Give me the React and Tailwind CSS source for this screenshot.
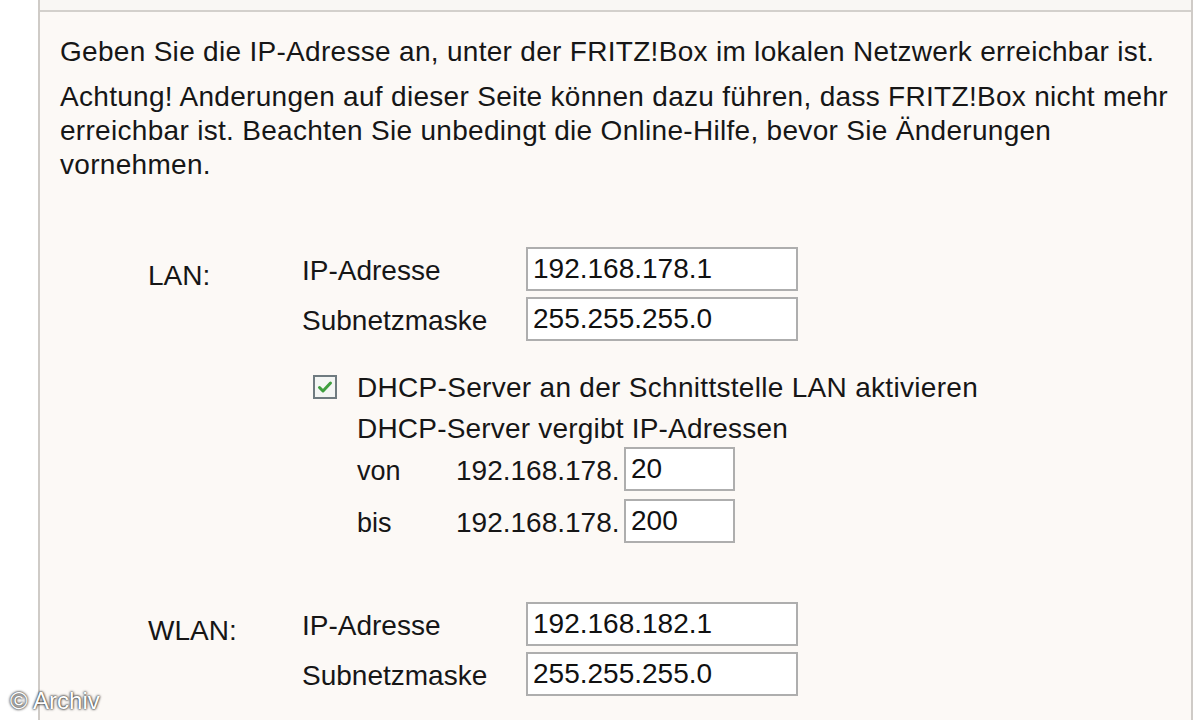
import React from 'react';

const TextBox = ({ value, className = '' }) => (
  <div
    className={`h-[44px] border-2 border-[#aeaeae] bg-white pl-[5px] flex items-center text-[28px] text-[#111] leading-none ${className}`}
  >
    {value}
  </div>
);

const AddressRows = ({ name, ip, mask, children }) => (
  <div className="flex">
    <div className="w-[154px] pt-[12px] text-[28px] leading-[34px]">{name}</div>
    <div className="flex flex-col">
      <div className="flex flex-col gap-[6px]">
        <div className="flex items-center">
          <div className="w-[224px] text-[28px] leading-[34px] pt-[4px]">IP-Adresse</div>
          <TextBox value={ip} className="w-[272px]" />
        </div>
        <div className="flex items-center">
          <div className="w-[224px] text-[28px] leading-[34px] pt-[4px]">Subnetzmaske</div>
          <TextBox value={mask} className="w-[272px]" />
        </div>
      </div>
      {children}
    </div>
  </div>
);

const CheckIcon = () => (
  <svg viewBox="0 0 24 24" className="w-[24px] h-[24px]">
    <rect x="1" y="1" width="22" height="22" fill="#f4f6f4" stroke="#6f7b80" strokeWidth="2" />
    <path d="M6.5 12.5 L10 16 L17.5 8" fill="none" stroke="#3f9f3f" strokeWidth="3" strokeLinecap="round" strokeLinejoin="round" />
  </svg>
);

export default function App() {
  return (
    <div
      className="relative w-[1200px] h-[720px] overflow-hidden bg-white text-[#161616]"
      style={{ fontFamily: '"Liberation Sans", Arial, sans-serif' }}
    >
      <div className="ml-[38px] w-[1155px] h-full flex flex-col border-x-2 border-[#cfcbc7] bg-[#fcf9f6]">
        <div className="h-[12px] bg-[#f9f7f4] border-b-2 border-[#d3d0cc] shrink-0"></div>

        <div className="pl-[20px] pt-[23px] text-[28px] leading-[34px]">
          <p className="tracking-[0.3px]">Geben Sie die IP-Adresse an, unter der FRITZ!Box im lokalen Netzwerk erreichbar ist.</p>
          <p className="mt-[11px] tracking-[0.3px]">
            Achtung! Anderungen auf dieser Seite können dazu führen, dass FRITZ!Box nicht mehr
            <br />
            erreichbar ist. Beachten Sie unbedingt die Online-Hilfe, bevor Sie Änderungen
            <br />
            vornehmen.
          </p>
        </div>

        <div className="pl-[108px] mt-[65px] flex flex-col gap-[58px]">
          <AddressRows name="LAN:" ip="192.168.178.1" mask="255.255.255.0">
            <div className="pl-[11px] mt-[29px] flex flex-col">
              <div className="flex items-center gap-[20px] h-[34px]">
                <CheckIcon />
                <span className="text-[28px] leading-[34px] tracking-[0.3px] pt-[2px]">DHCP-Server an der Schnittstelle LAN aktivieren</span>
              </div>
              <div className="pl-[44px] mt-[8px] text-[28px] leading-[34px] tracking-[0.2px]">DHCP-Server vergibt IP-Adressen</div>
              <div className="pl-[44px] mt-[0px] flex flex-col gap-[6px]">
                <div className="flex items-center">
                  <span className="w-[99px] text-[27px] pt-[4px]">von</span>
                  <span className="w-[168px] text-[28px] pt-[4px]">192.168.178.</span>
                  <TextBox value="20" className="w-[111px]" />
                </div>
                <div className="flex items-center">
                  <span className="w-[99px] text-[27px] pt-[4px]">bis</span>
                  <span className="w-[168px] text-[28px] pt-[4px]">192.168.178.</span>
                  <TextBox value="200" className="w-[111px]" />
                </div>
              </div>
            </div>
          </AddressRows>

          <AddressRows name="WLAN:" ip="192.168.182.1" mask="255.255.255.0" />
        </div>
      </div>

      <div className="absolute left-[10px] top-[683px] text-[24px] text-white [text-shadow:0_0_3px_#222,0_0_2px_#222]">
        © Archiv
      </div>
    </div>
  );
}
